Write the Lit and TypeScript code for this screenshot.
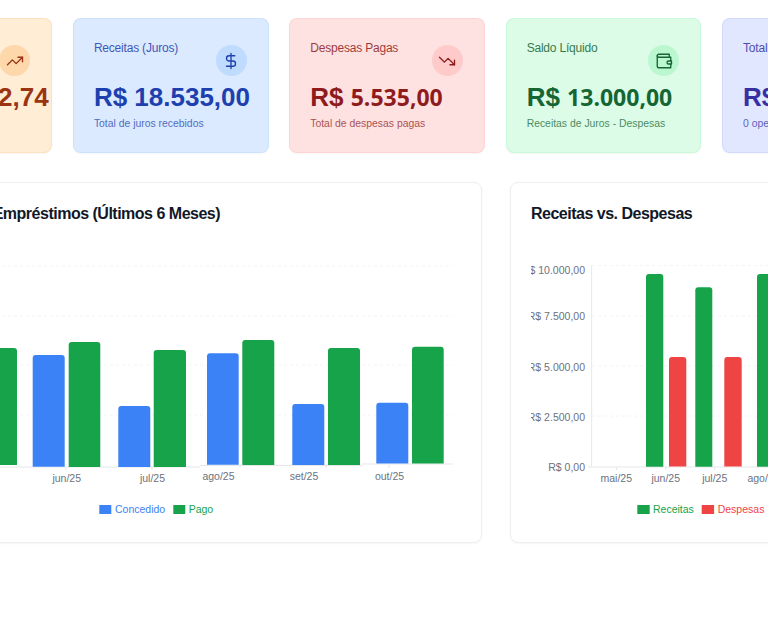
import { LitElement, html, css, svg } from "lit";
import { customElement } from "lit/decorators.js";

type Bar = [number, number, number, number, string];
type Label = [string, number, number];
const BLUE = "#3b82f6", GREEN = "#16a34a", RED = "#ef4444";

const ICONS = {
  up: svg`<polyline points="22 7 13.5 15.5 8.5 10.5 2 17"></polyline><polyline points="16 7 22 7 22 13"></polyline>`,
  dollar: svg`<line x1="12" y1="2" x2="12" y2="22"></line><path d="M17 5H9.5a3.5 3.5 0 0 0 0 7h5a3.5 3.5 0 0 1 0 7H6"></path>`,
  down: svg`<polyline points="22 17 13.5 8.5 8.5 13.5 2 7"></polyline><polyline points="16 17 22 17 22 11"></polyline>`,
  wallet: svg`<path d="M21 12V7H5a2 2 0 0 1 0-4h14v4"></path><path d="M3 5v14a2 2 0 0 0 2 2h16v-5"></path><path d="M18 12a2 2 0 0 0 0 4h4v-4Z"></path>`,
};

const CARDS = [
  { tone: "orange", label: "Capital Emprestado", head: "R$ 118.532,74", tail: "", sub: "Total de capital na rua", icon: ICONS.up },
  { tone: "blue", label: "Receitas (Juros)", head: "R$ 18.535,00", tail: "", sub: "Total de juros recebidos", icon: ICONS.dollar },
  { tone: "red", label: "Despesas Pagas", head: "R$ ", tail: "5.535,00", sub: "Total de despesas pagas", icon: ICONS.down },
  { tone: "green", label: "Saldo Líquido", head: "R$ ", tail: "13.000,00", sub: "Receitas de Juros - Despesas", icon: ICONS.wallet },
  { tone: "indigo", label: "Total Emprestado", head: "R$ 0,00", tail: "", sub: "0 operações", icon: ICONS.up },
];

const LOAN_BARS: Bar[] = [
  [-15, 17, 348, 465, GREEN],
  [32.7, 64.7, 355, 466.8, BLUE], [68.7, 100.3, 342, 467, GREEN],
  [118.3, 150.3, 406, 467, BLUE], [153.7, 186, 350, 467, GREEN],
  [207, 238.7, 353.3, 464.8, BLUE], [242.3, 274.3, 340, 465, GREEN],
  [292.3, 324.3, 404, 465, BLUE], [328, 360, 348, 465, GREEN],
  [376.3, 408.3, 402.7, 463.4, BLUE], [412, 443.7, 346.8, 463.5, GREEN],
];
const LOAN_LABELS: Label[] = [
  ["jun/25", 66.7, 478], ["jul/25", 152.5, 478], ["ago/25", 218.5, 476], ["set/25", 304, 476], ["out/25", 389.5, 476],
];
const FLOW_BARS: Bar[] = [
  [646, 663.3, 274, 466.8, GREEN], [669, 686.3, 357, 466.5, RED],
  [695.3, 712.3, 287.3, 466.8, GREEN], [724.3, 741.7, 357, 466.5, RED],
  [757, 774, 274, 466.8, GREEN],
];
const FLOW_LABELS: Label[] = [
  ["mai/25", 616.3, 478], ["jun/25", 665.7, 478], ["jul/25", 714.7, 478], ["ago/25", 763.5, 478],
];
const FLOW_TICKS: [string, number][] = [
  ["R$ 10.000,00", 269.5], ["R$ 7.500,00", 316], ["R$ 5.000,00", 366.5], ["R$ 2.500,00", 416.5], ["R$ 0,00", 467],
];

function barPath([x1, x2, top, bottom]: Bar) {
  const r = 3;
  return `M${x1} ${bottom}V${top + r}Q${x1} ${top} ${x1 + r} ${top}H${x2 - r}Q${x2} ${top} ${x2} ${top + r}V${bottom}Z`;
}
const bars = (list: Bar[]) => list.map((b) => svg`<path d=${barPath(b)} fill=${b[4]}></path>`);
const xLabels = (list: Label[]) =>
  list.map(([t, x, y]) => svg`<text class="tick" x=${x} y=${y} text-anchor="middle" dominant-baseline="central">${t}</text>`);
const grid = (x1: number, x2: number, ys: number[]) =>
  ys.map((y) => svg`<line class="grid" x1=${x1} x2=${x2} y1=${y} y2=${y}></line>`);
const legend = (x: number, tx: number, w: number, color: string, text: string) => svg`
  <rect x=${x} y="505" width=${w} height="9" fill=${color}></rect>
  <text class="legend" x=${tx} y="509" fill=${color} dominant-baseline="central">${text}</text>`;

@customElement("app-root")
export class AppRoot extends LitElement {
  static styles = css`
    :host {
      display: block;
      width: 768px;
      height: 638px;
      overflow: hidden;
      background: #fff;
      font-family: "Liberation Sans", Arial, sans-serif;
    }
    .stats {
      display: flex;
      gap: 20.7px;
      padding-top: 18px;
      margin-left: -143.5px;
    }
    .stat {
      flex: none;
      box-sizing: border-box;
      width: 195.7px;
      height: 135px;
      padding: 20px 21px 0 20px;
      border-radius: 8px;
      border: 1px solid;
      box-shadow: 0 1px 2px rgba(0, 0, 0, 0.04);
    }
    .top {
      display: flex;
      justify-content: space-between;
      align-items: flex-start;
    }
    .label {
      font-size: 12px;
      line-height: 18px;
      letter-spacing: -0.2px;
      opacity: 0.85;
      white-space: nowrap;
    }
    .circle {
      flex: none;
      width: 31px;
      height: 31px;
      margin-top: 6px;
      border-radius: 50%;
      display: flex;
      align-items: center;
      justify-content: center;
    }
    .circle svg {
      width: 18px;
      height: 18px;
      fill: none;
      stroke: currentColor;
      stroke-width: 1.8;
      stroke-linecap: round;
      stroke-linejoin: round;
    }
    .value {
      margin-top: 4px;
      height: 34px;
      line-height: 34px;
      font-size: 26px;
      font-weight: 700;
      white-space: nowrap;
    }
    .value .alt {
      font-family: "Open Sans", sans-serif;
      font-size: 23px;
    }
    .orange .value {
      margin-left: 2px;
    }
    .sub {
      margin-top: 2px;
      font-size: 10.4px;
      line-height: 16px;
      opacity: 0.75;
      white-space: nowrap;
    }
    .orange { background: #ffedd5; border-color: #fed7aa99; color: #9a3412; }
    .orange .circle { background: #fed7aa; }
    .blue { background: #dbeafe; border-color: #bfdbfe99; color: #1e40af; }
    .blue .circle { background: #bfdbfe; }
    .red { background: #fee2e2; border-color: #fecaca99; color: #8f1c1c; }
    .red .circle { background: #fecaca; }
    .green { background: #dcfce7; border-color: #bbf7d099; color: #166534; }
    .green .circle { background: #bbf7d0; }
    .indigo { background: #e0e7ff; border-color: #c7d2fe99; color: #3730a3; }
    .indigo .circle { background: #c7d2fe; }
    .charts {
      display: flex;
      gap: 28.5px;
      margin: 29px 0 0 -121px;
    }
    .panel {
      flex: none;
      box-sizing: border-box;
      width: 602.5px;
      height: 361px;
      padding: 20px;
      background: #fff;
      border: 1px solid #eceef1;
      border-radius: 8px;
      box-shadow: 0 1px 2px rgba(0, 0, 0, 0.04);
    }
    h3 {
      margin: 0 0 15px;
      font-size: 16px;
      line-height: 22px;
      letter-spacing: -0.5px;
      font-weight: 700;
      color: #111827;
      white-space: nowrap;
    }
    .plot {
      display: block;
      width: 560px;
      height: 282px;
      overflow: hidden;
    }
    .tick, .legend {
      font-size: 10.5px;
      font-family: "Liberation Sans", Arial, sans-serif;
    }
    .tick { fill: #6b7280; }
    .grid {
      stroke: #f3f4f6;
      stroke-width: 1;
      stroke-dasharray: 3 3;
    }
    .axis {
      stroke: #e5e7eb;
      stroke-width: 1;
    }
  `;

  render() {
    return html`
      <div class="stats">
        ${CARDS.map(
          (c) => html`
            <div class="stat ${c.tone}">
              <div class="top">
                <div class="label">${c.label}</div>
                <div class="circle"><svg viewBox="0 0 24 24">${c.icon}</svg></div>
              </div>
              <div class="value">${c.head}<span class="alt">${c.tail}</span></div>
              <div class="sub">${c.sub}</div>
            </div>
          `
        )}
      </div>
      <div class="charts">
        <section class="panel">
          <h3>Evolução de Empréstimos (Últimos 6 Meses)</h3>
          <svg class="plot" viewBox="-100 240 560 282">
            ${grid(-100, 453, [266, 316, 365, 415])}
            <line class="axis" x1="-100" x2="200" y1="467" y2="467"></line>
            <line class="axis" x1="200" x2="362" y1="465.5" y2="465.5"></line>
            <line class="axis" x1="362" x2="453" y1="464" y2="464"></line>
            ${[66, 152].map((x) => svg`<line class="axis" x1=${x} x2=${x} y1="467" y2="470"></line>`)}
            ${[240, 326, 389].map((x) => svg`<line class="axis" x1=${x} x2=${x} y1="465" y2="468"></line>`)}
            ${bars(LOAN_BARS)}
            ${xLabels(LOAN_LABELS)}
            ${legend(99.3, 115, 12, BLUE, "Concedido")}
            ${legend(173.3, 188.7, 12, GREEN, "Pago")}
          </svg>
        </section>
        <section class="panel">
          <h3>Receitas vs. Despesas</h3>
          <svg class="plot" viewBox="531 240 560 282">
            ${grid(592, 1080, [265.5, 316, 366, 416])}
            <line class="axis" x1="591.7" x2="591.7" y1="265" y2="467"></line>
            <line class="axis" x1="588" x2="1080" y1="467" y2="467"></line>
            ${[616.5, 665.7, 714.7].map((x) => svg`<line class="axis" x1=${x} x2=${x} y1="467" y2="470"></line>`)}
            ${bars(FLOW_BARS)}
            ${FLOW_TICKS.map(
              ([t, y]) => svg`<text class="tick" x="585" y=${y} text-anchor="end" dominant-baseline="central">${t}</text>`
            )}
            ${xLabels(FLOW_LABELS)}
            ${legend(637.3, 653, 12.4, GREEN, "Receitas")}
            ${legend(701.7, 717.7, 12.4, RED, "Despesas")}
          </svg>
        </section>
      </div>
    `;
  }
}
